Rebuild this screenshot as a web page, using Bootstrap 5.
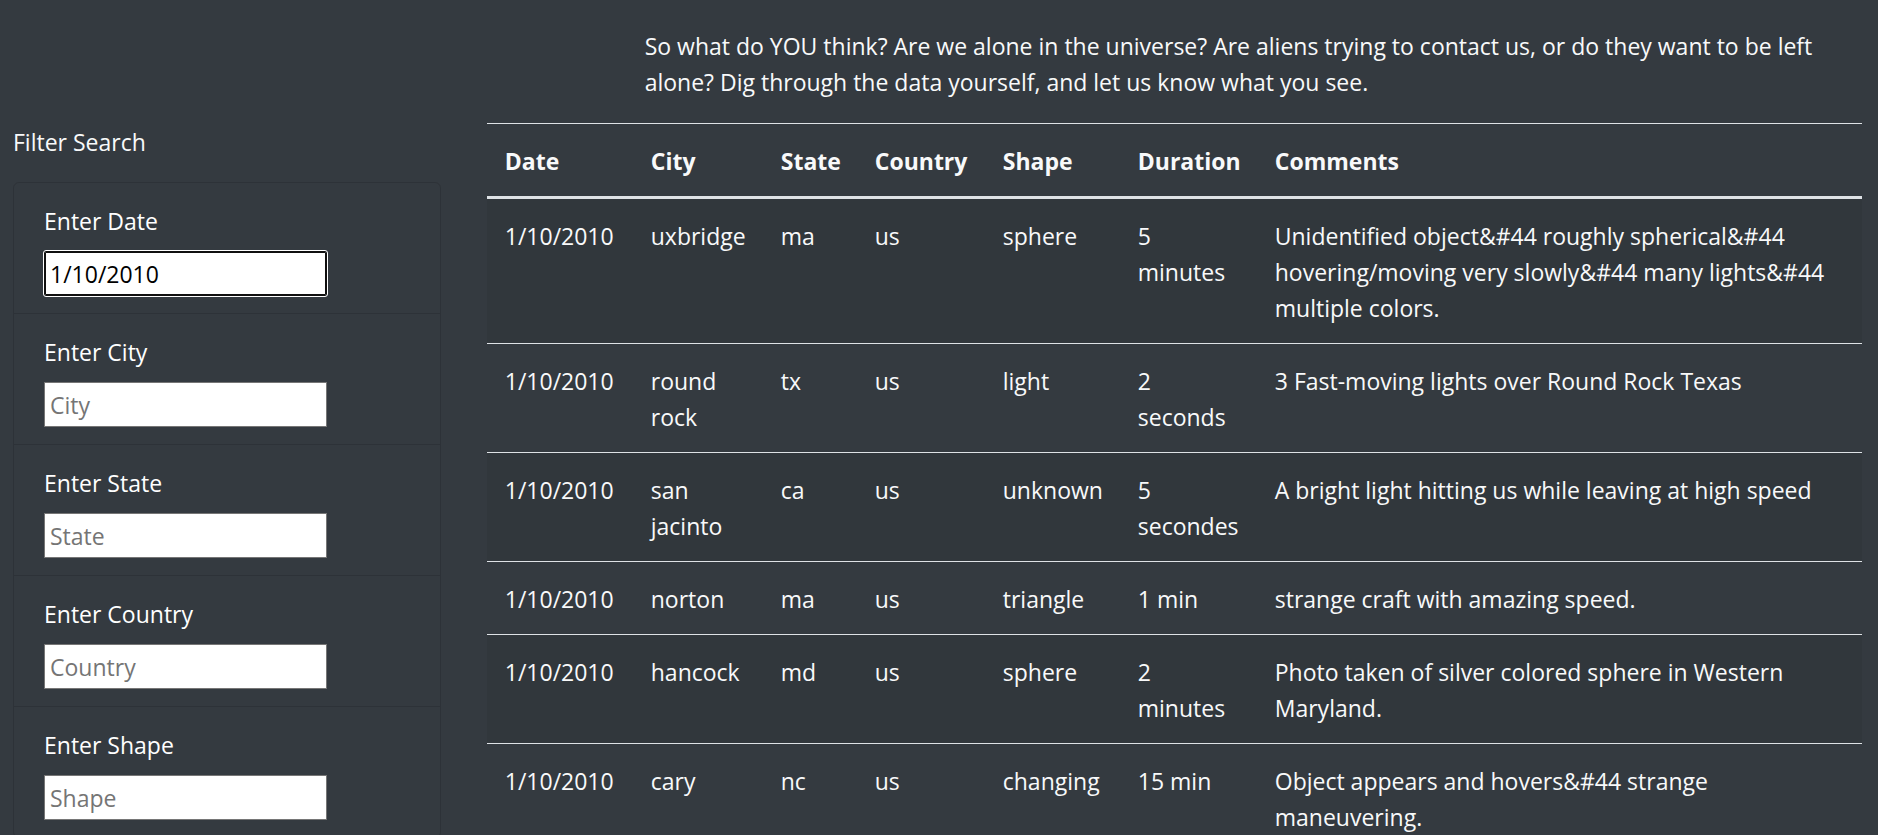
<!DOCTYPE html>
<html lang="en">
<head>
<meta charset="utf-8">
<meta name="viewport" content="width=device-width, initial-scale=1">
<title>UFO Sightings</title>
<link href="https://cdn.jsdelivr.net/npm/bootstrap@5.3.0/dist/css/bootstrap.min.css" rel="stylesheet">
<style>
  body { background: #343a40; color: #f8f9fa; font-family: "Open Sans", "Noto Sans", sans-serif; font-size: 23px; line-height: 36px; }
  .page { padding: 28px 16px 0 13px; }
  .page > .row { --bs-gutter-x: 46px; }
  .intro { margin-bottom: 23px; }
  .filter-title { padding-top: 1px; margin-bottom: 22px; }
  .filters { --bs-list-group-bg: transparent; --bs-list-group-color: #fff; --bs-list-group-border-color: rgba(0, 0, 0, .125); --bs-list-group-item-padding-x: 30px; --bs-list-group-border-radius: 6px; }
  .filters .list-group-item { padding-top: 20px; padding-bottom: 17px; }
  .filters label { margin-bottom: 12px; }
  .filters input { width: 283px; max-width: 100%; height: 45px; padding: 3px 5px 2px; border: 1px solid #767676; background: #fff; color: #000; }
  .filters input::placeholder { color: #757575; opacity: 1; }
  .filters input:focus { border-color: #101010; outline: 1px solid #fff; box-shadow: inset 0 0 0 1px #101010; border-radius: 2px; }
  .sightings { --bs-table-color: #f8f9fa; --bs-table-bg: transparent; --bs-table-striped-color: #f8f9fa; --bs-table-striped-bg: rgba(0, 0, 0, .05); --bs-table-border-color: #dee2e6; table-layout: fixed; }
  .sightings > :not(caption) > * > * { padding: 19px 18px 17px; border-width: 1px 0 0; }
  .sightings > thead > tr > th { border-bottom-width: 3px; }
  .sightings > tbody > tr:first-child > td { border-top-width: 0; }
  .c-date { width: 146px; } .c-city { width: 130px; } .c-state { width: 94px; } .c-country { width: 128px; }
  .c-shape { width: 135px; } .c-duration { width: 137px; }
</style>
</head>
<body class="vh-100 overflow-hidden">
<main class="container-fluid page">
  <div class="row">
    <div class="col-8 offset-4">
      <p class="intro">So what do YOU think? Are we alone in the universe? Are aliens trying to contact us, or do they want to be left alone? Dig through the data yourself, and let us know what you see.</p>
    </div>
  </div>
  <div class="row">
    <aside class="col-3">
      <form>
        <p class="filter-title">Filter Search</p>
        <ul class="list-group filters">
          <li class="list-group-item"><label class="d-block" for="datetime">Enter Date</label><input class="d-block" type="text" id="datetime" placeholder="1/10/2010" value="1/10/2010" autofocus></li>
          <li class="list-group-item"><label class="d-block" for="city">Enter City</label><input class="d-block" type="text" id="city" placeholder="City"></li>
          <li class="list-group-item"><label class="d-block" for="state">Enter State</label><input class="d-block" type="text" id="state" placeholder="State"></li>
          <li class="list-group-item"><label class="d-block" for="country">Enter Country</label><input class="d-block" type="text" id="country" placeholder="Country"></li>
          <li class="list-group-item"><label class="d-block" for="shape">Enter Shape</label><input class="d-block" type="text" id="shape" placeholder="Shape"></li>
        </ul>
      </form>
    </aside>
    <div class="col-9">
      <table class="table table-striped sightings">
        <colgroup><col class="c-date"><col class="c-city"><col class="c-state"><col class="c-country"><col class="c-shape"><col class="c-duration"><col></colgroup>
        <thead>
          <tr><th>Date</th><th>City</th><th>State</th><th>Country</th><th>Shape</th><th>Duration</th><th>Comments</th></tr>
        </thead>
        <tbody>
          <tr><td>1/10/2010</td><td>uxbridge</td><td>ma</td><td>us</td><td>sphere</td><td>5 minutes</td><td>Unidentified object&amp;#44 roughly spherical&amp;#44 hovering/moving very slowly&amp;#44 many lights&amp;#44 multiple colors.</td></tr>
          <tr><td>1/10/2010</td><td>round rock</td><td>tx</td><td>us</td><td>light</td><td>2 seconds</td><td>3 Fast-moving lights over Round Rock Texas</td></tr>
          <tr><td>1/10/2010</td><td>san jacinto</td><td>ca</td><td>us</td><td>unknown</td><td>5 secondes</td><td>A bright light hitting us while leaving at high speed</td></tr>
          <tr><td>1/10/2010</td><td>norton</td><td>ma</td><td>us</td><td>triangle</td><td>1 min</td><td>strange craft with amazing speed.</td></tr>
          <tr><td>1/10/2010</td><td>hancock</td><td>md</td><td>us</td><td>sphere</td><td>2 minutes</td><td>Photo taken of silver colored sphere in Western Maryland.</td></tr>
          <tr><td>1/10/2010</td><td>cary</td><td>nc</td><td>us</td><td>changing</td><td>15 min</td><td>Object appears and hovers&amp;#44 strange maneuvering.</td></tr>
        </tbody>
      </table>
    </div>
  </div>
</main>
<script src="https://cdn.jsdelivr.net/npm/bootstrap@5.3.0/dist/js/bootstrap.bundle.min.js"></script>
</body>
</html>
